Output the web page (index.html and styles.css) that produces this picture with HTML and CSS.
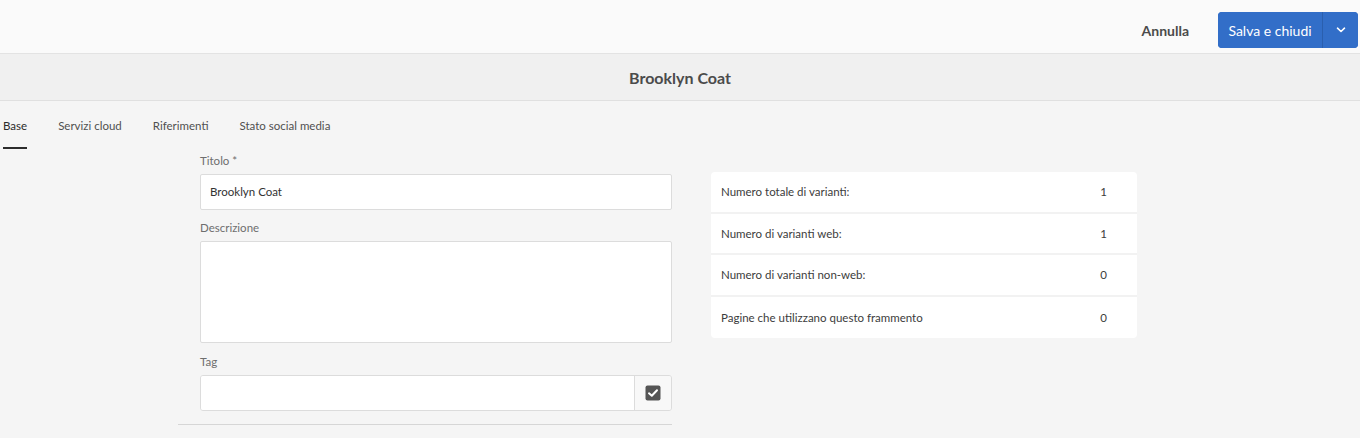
FILE: index.html
```html
<!DOCTYPE html>
<html lang="it">
<head>
<meta charset="utf-8">
<title>Brooklyn Coat</title>
<link rel="stylesheet" href="styles.css">
</head>
<body>
<header class="actionbar">
  <button class="btn-quiet">Annulla</button>
  <div class="split">
    <button class="split-main">Salva e chiudi</button>
    <button class="split-toggle" aria-label="Altre azioni">
      <svg width="10" height="6" viewBox="0 0 10 6"><path d="M1.5 1.2 L5 4.5 L8.5 1.2" fill="none" stroke="#fff" stroke-width="1.6" stroke-linecap="round" stroke-linejoin="round"/></svg>
    </button>
  </div>
</header>
<div class="titlebar"><h1>Brooklyn Coat</h1></div>
<nav class="tabs">
  <a class="tab active">Base</a>
  <a class="tab">Servizi cloud</a>
  <a class="tab">Riferimenti</a>
  <a class="tab">Stato social media</a>
</nav>
<main class="content">
  <section class="form">
    <label class="label">Titolo *</label>
    <div class="input">Brooklyn Coat</div>
    <label class="label">Descrizione</label>
    <div class="textarea"></div>
    <label class="label">Tag</label>
    <div class="taginput">
      <div class="tagfield"></div>
      <div class="tagbtn">
        <svg width="16" height="16" viewBox="0 0 16 16"><rect x="0.5" y="0.5" width="15" height="15" rx="2" fill="#555"/><path d="M4 8.3 L6.8 10.8 L12 5.2" fill="none" stroke="#fff" stroke-width="2" stroke-linecap="round" stroke-linejoin="round"/></svg>
      </div>
    </div>
    <div class="divider"></div>
  </section>
  <section class="stats">
    <div class="row"><span>Numero totale di varianti:</span><span class="val">1</span></div>
    <div class="row"><span>Numero di varianti web:</span><span class="val">1</span></div>
    <div class="row"><span>Numero di varianti non-web:</span><span class="val">0</span></div>
    <div class="row"><span>Pagine che utilizzano questo frammento</span><span class="val">0</span></div>
  </section>
</main>
</body>
</html>
```
FILE: styles.css
```css
* { box-sizing: border-box; }
html, body { margin: 0; padding: 0; }
body {
  background: #f5f5f5;
  font-family: "Lato", "Open Sans", sans-serif;
  color: #4b4b4b;
  width: 1360px;
  height: 438px;
  overflow: hidden;
}
.actionbar {
  height: 54px;
  background: #fafafa;
  border-bottom: 1px solid #e3e3e3;
  display: flex;
  align-items: center;
  justify-content: flex-end;
  padding-right: 2px;
  padding-top: 7px;
}
.btn-quiet {
  border: 0;
  background: transparent;
  font-family: inherit;
  font-size: 14px;
  font-weight: 700;
  color: #4b4b4b;
  margin-right: 29px;
  padding: 0;
}
.split {
  display: flex;
  height: 36px;
  border-radius: 4px;
  overflow: hidden;
  background: #326ec8;
}
.split-main, .split-toggle {
  border: 0;
  background: #326ec8;
  color: #fff;
  font-family: inherit;
  font-size: 14px;
  padding: 0;
}
.split-main { width: 104px; }
.split-toggle {
  width: 36px;
  border-left: 1px solid #2a5fae;
  display: flex;
  align-items: center;
  justify-content: center;
}
.titlebar {
  height: 47px;
  background: #f0f0f0;
  border-bottom: 1px solid #e0e0e0;
  display: flex;
  align-items: center;
  justify-content: center;
}
.titlebar h1 {
  margin: 0;
  font-size: 16px;
  font-weight: 700;
  color: #4b4b4b;
}
.tabs {
  display: flex;
  gap: 31px;
  padding-left: 3px;
  height: 48px;
}
.tab {
  font-size: 11.5px;
  color: #505050;
  padding-top: 18px;
  height: 48px;
}
.tab.active {
  color: #2c2c2c;
  border-bottom: 2px solid #2c2c2c;
}
.content {
  display: flex;
  align-items: flex-start;
  padding-left: 177px;
}
.form {
  width: 495px;
  display: flex;
  flex-direction: column;
  align-items: flex-end;
}
.label {
  width: 472px;
  font-size: 11.5px;
  color: #6e6e6e;
  margin-top: 4px;
  height: 21px;
  padding-top: 1px;
}
.input {
  width: 472px;
  height: 36px;
  background: #fff;
  border: 1px solid #dcdcdc;
  border-radius: 2px;
  font-size: 11.5px;
  color: #323232;
  padding: 10px 9px;
  margin-bottom: 6px;
}
.textarea {
  width: 472px;
  height: 102px;
  background: #fff;
  border: 1px solid #dcdcdc;
  border-radius: 2px;
  margin-bottom: 7px;
}
.taginput {
  width: 472px;
  height: 36px;
  display: flex;
  border: 1px solid #dcdcdc;
  border-radius: 3px;
  overflow: hidden;
}
.tagfield { flex: 1; background: #fff; }
.tagbtn {
  width: 37px;
  background: #f8f8f8;
  border-left: 1px solid #dcdcdc;
  display: flex;
  align-items: center;
  justify-content: center;
}
.divider {
  width: 494px;
  height: 1px;
  background: #d6d6d6;
  margin-top: 13px;
}
.stats {
  margin-left: 39px;
  margin-top: 23px;
  width: 426px;
  background: #fff;
  border-radius: 4px;
  overflow: hidden;
}
.row {
  height: 41.5px;
  display: flex;
  align-items: center;
  justify-content: space-between;
  padding: 0 30px 0 10px;
  font-size: 11.5px;
  color: #3c3c3c;
  border-bottom: 2px solid #f2f2f2;
}
.row:last-child { border-bottom: 0; }
```
